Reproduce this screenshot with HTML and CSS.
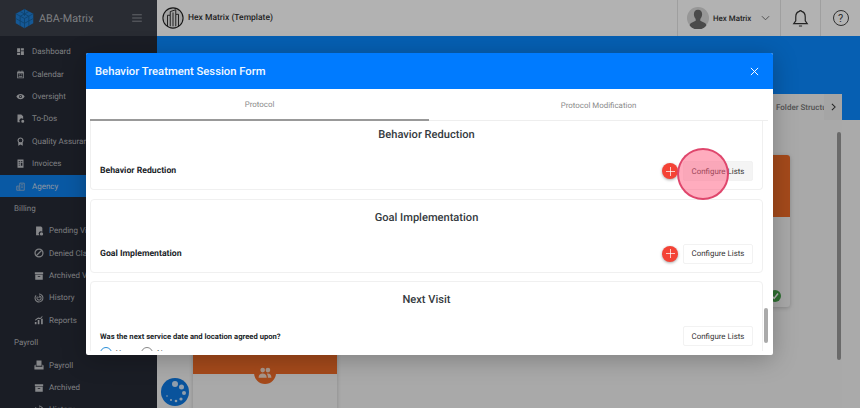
FILE: index.html
```html
<!DOCTYPE html>
<html>
<head>
  <title>ABA-Matrix - Agency</title>
  <link rel="stylesheet" href="styles.css">
</head>
<body>
  <div class="app">
    <!-- Left navigation -->
    <aside class="sidebar">
      <div class="brand">
        <svg class="logo" viewBox="0 0 24 24"><path d="M12 1l10 5.500v11L12 23 2 17.500v-11z" fill="#1f7fd6"/><path d="M12 1v8M2 6.500l10 5.500 10-5.500M12 12v11M7 4l10 5.500M17 4L7 9.500M7 9.500v11M17 9.500v11M2 12l10 5.500L22 12" stroke="#14609f" stroke-width="1" fill="none"/></svg>
        <span class="brand-name">ABA-Matrix</span>
        <svg class="burger" viewBox="0 0 12 10"><path d="M0 1h12M0 5h12M0 9h12" stroke="#a5a8ad" stroke-width="1"/></svg>
      </div>
      <nav class="nav">
        <a class="nav-item"><svg viewBox="0 0 24 24"><path d="M3 3h8v10H3zM13 3h8v6h-8zM13 11h8v10h-8zM3 15h8v6H3z"/></svg>Dashboard</a>
        <a class="nav-item"><svg viewBox="0 0 24 24"><path d="M7 1h2v3h6V1h2v3h3a1 1 0 0 1 1 1v16a1 1 0 0 1-1 1H4a1 1 0 0 1-1-1V5a1 1 0 0 1 1-1h3zM5 9v11h14V9zm2 3h4v2H7zm6 0h4v2h-4zm-6 4h10v2H7z"/></svg>Calendar</a>
        <a class="nav-item"><svg viewBox="0 0 24 24"><path fill-rule="evenodd" d="M12 5c5 0 9 3 11 7-2 4-6 7-11 7S3 16 1 12c2-4 6-7 11-7zm0 3a4 4 0 1 0 0 8 4 4 0 0 0 0-8zm0 2a2 2 0 1 1 0 4 2 2 0 0 1 0-4z"/></svg>Oversight</a>
        <a class="nav-item"><svg viewBox="0 0 24 24"><path d="M4 1h10l5 5v7a6 6 0 0 0-8 9H4zM18 15a4 4 0 1 1 0 8 4 4 0 0 1 0-8z"/></svg>To-Dos</a>
        <a class="nav-item"><svg viewBox="0 0 24 24"><path fill-rule="evenodd" d="M12 1a8 8 0 0 1 6 13.300V23l-6-3-6 3v-8.700A8 8 0 0 1 12 1zm0 3a5 5 0 1 0 0 10 5 5 0 0 0 0-10z"/></svg>Quality Assurance</a>
        <a class="nav-item"><svg viewBox="0 0 24 24"><path fill-rule="evenodd" d="M4 1h16v22H4zm3 4v2h4V5zm6 0v2h4V5zM7 10v2h4v-2zm6 0v8h4v-8zM7 15v2h4v-2z"/></svg>Invoices</a>
        <a class="nav-item active"><svg viewBox="0 0 24 24"><path fill="none" stroke="#aebfd4" stroke-width="2" d="M2 22V11h8V3h12v19zM10 11v11M14 7h4M14 11h4M14 15h4M5 15h2M5 18h2"/></svg>Agency</a>
        <div class="nav-head">Billing</div>
        <a class="nav-item sub"><svg viewBox="0 0 24 24"><path d="M5 1h12l3 3v10a5 5 0 0 0-7 8H5zM18 15a4 4 0 1 1 0 8 4 4 0 0 1 0-8z"/></svg>Pending Visits</a>
        <a class="nav-item sub"><svg viewBox="0 0 24 24"><path fill="none" stroke="#b4b6ba" stroke-width="3" d="M12 2.500a9.500 9.500 0 1 0 0 19 9.500 9.500 0 0 0 0-19zM5.500 18.500l13-13"/></svg>Denied Claims</a>
        <a class="nav-item sub"><svg viewBox="0 0 24 24"><path fill-rule="evenodd" d="M2 3h20v5H2zm1 6h18v12H3zm6 3v2h6v-2z"/></svg>Archived Visits</a>
        <a class="nav-item sub"><svg viewBox="0 0 24 24"><path fill="none" stroke="#b4b6ba" stroke-width="2.500" d="M12 2.500a9.500 9.500 0 1 1-7 3M12 7a5 5 0 1 1-3.500 1.500M12 12V9"/></svg>History</a>
        <a class="nav-item sub"><svg viewBox="0 0 24 24"><path d="M2 17h4v5H2zM9 12h4v10H9zM17 9h4v13h-4zM3 11l7-5 5 1 5-5v3l-5 5-5-1-7 5z"/></svg>Reports</a>
        <div class="nav-head">Payroll</div>
        <a class="nav-item sub"><svg viewBox="0 0 24 24"><path d="M6 1h12v13H6zM1 13l3-2v5h16v-5l3 2v10H1z"/></svg>Payroll</a>
        <a class="nav-item sub"><svg viewBox="0 0 24 24"><path fill-rule="evenodd" d="M2 3h20v5H2zm1 6h18v12H3zm6 3v2h6v-2z"/></svg>Archived</a>
        <a class="nav-item sub"><svg viewBox="0 0 24 24"><path fill="none" stroke="#b4b6ba" stroke-width="2.500" d="M12 2.500a9.500 9.500 0 1 1-7 3M12 7a5 5 0 1 1-3.500 1.500M12 12V9"/></svg>History</a>
      </nav>
    </aside>

    <!-- Main area behind the dialog -->
    <main class="main">
      <header class="topbar">
        <svg class="org-icon" viewBox="0 0 24 24"><circle cx="12" cy="12" r="11" fill="#e8e8e8" stroke="#222" stroke-width="1.200"/><path d="M6 21V9h3V5l6-2v5h3v13M9 9v12M12 6v15M15 8v13" fill="none" stroke="#222" stroke-width="1"/></svg>
        <span class="org-name">Hex Matrix (Template)</span>
        <div class="top-right">
          <div class="user">
            <svg class="user-pic" viewBox="0 0 24 24"><circle cx="12" cy="12" r="12" fill="#d8d8d8"/><path d="M12 3c3 0 4.500 2 4.500 5 0 2-1 4-2 5v2l5 2.500c1 .5 1.500 1.500 1.500 3A12 12 0 0 1 3 20.500c0-1.500.5-2.500 1.500-3L9.500 15v-2c-1-1-2-3-2-5 0-3 1.500-5 4.500-5z" fill="#6a6a6a"/></svg>
            <span class="user-name">Hex Matrix</span>
            <svg class="chevron" viewBox="0 0 10 6"><path d="M1 1l4 4 4-4" fill="none" stroke="#666" stroke-width="1"/></svg>
          </div>
          <div class="top-btn">
            <svg viewBox="0 0 24 24"><path d="M12 2a2 2 0 0 1 1.500 1C17 4 18 7 18 10v5l2.500 3.500h-17L6 15v-5c0-3 1-6 4.500-7A2 2 0 0 1 12 2zM10 21.500h4" fill="none" stroke="#333" stroke-width="1.500"/></svg>
          </div>
          <div class="top-btn help"><span>?</span></div>
        </div>
      </header>
      <div class="band"></div>
      <section class="panel">
        <div class="tab-row">
          <span class="folder-tab">Folder Structure</span>
          <span class="tab-next"><svg viewBox="0 0 6 10"><path d="M1 1l4 4-4 4" fill="none" stroke="#333" stroke-width="1.300"/></svg></span>
        </div>
        <div class="cards">
          <div class="card"><div class="card-top"></div></div>
          <div class="card"><div class="card-top"></div></div>
          <div class="card"><div class="card-top"></div></div>
          <div class="card"><div class="card-top"></div><span class="done"><svg viewBox="0 0 10 10"><path d="M2.500 5.200l1.800 1.800 3.200-4" fill="none" stroke="#fff" stroke-width="1.300"/></svg></span></div>
          <div class="card low">
            <div class="card-top">
              <span class="card-badge"><svg viewBox="0 0 24 24"><circle cx="8" cy="7" r="4"/><circle cx="17" cy="7" r="4"/><path d="M1 20c0-5 3-7 7-7s7 2 7 7zM16.500 13c4 0 6.500 2 6.500 7h-6c0-3-.5-5-2-6.800z"/></svg></span>
            </div>
          </div>
        </div>
        <span class="panel-scroll"></span>
      </section>
    </main>
  </div>

  <span class="spinner">
    <svg viewBox="0 0 28 28"><circle cx="14" cy="14" r="14" fill="#0d78e0"/><g fill="#cfe3f7"><circle cx="14" cy="6" r="3"/><circle cx="20.500" cy="9" r="2.500"/><circle cx="23" cy="15" r="2"/><circle cx="20" cy="21" r="1.600"/><circle cx="15" cy="23" r="1.300"/><circle cx="10" cy="22" r="1"/><circle cx="6" cy="18" r=".8"/></g></svg>
  </span>

  <!-- Dim layer and dialog -->
  <div class="dim"></div>
  <div class="modal">
    <div class="modal-head">
      <h2>Behavior Treatment Session Form</h2>
      <svg class="modal-close" viewBox="0 0 10 10"><path d="M1 1l8 8M9 1l-8 8" stroke="#fff" stroke-width="1.100"/></svg>
    </div>
    <div class="modal-tabs">
      <div class="modal-tab active">Protocol</div>
      <div class="modal-tab">Protocol Modification</div>
    </div>
    <div class="modal-body">
      <div class="form-card">
        <h3>Behavior Reduction</h3>
        <div class="form-row">
          <span class="row-label">Behavior Reduction</span>
          <span class="add-btn"><svg viewBox="0 0 10 10"><path d="M5 0v10M0 5h10" stroke="#fff" stroke-width=".8"/></svg></span>
          <button class="btn-lists hovered">Configure Lists</button>
        </div>
      </div>
      <div class="form-card">
        <h3>Goal Implementation</h3>
        <div class="form-row">
          <span class="row-label">Goal Implementation</span>
          <span class="add-btn"><svg viewBox="0 0 10 10"><path d="M5 0v10M0 5h10" stroke="#fff" stroke-width=".8"/></svg></span>
          <button class="btn-lists">Configure Lists</button>
        </div>
      </div>
      <div class="form-card tall">
        <h3>Next Visit</h3>
        <div class="form-row">
          <span class="row-label small">Was the next service date and location agreed upon?</span>
          <button class="btn-lists">Configure Lists</button>
        </div>
        <div class="radios">
          <span class="radio on">Yes</span>
          <span class="radio">No</span>
        </div>
      </div>
    </div>
    <span class="modal-scroll"></span>
  </div>

  <!-- Click highlight -->
  <span class="click-mark"></span>
</body>
</html>
```

FILE: styles.css
```css
html, body {
  margin: 0;
  height: 100%;
  overflow: hidden;
}
body {
  font-family: Roboto, "Liberation Sans", sans-serif;
  color: #212529;
  background: #f4f4f4;
  text-rendering: geometricPrecision;
}
.app {
  display: flex;
  height: 408px;
  overflow: hidden;
}

/* Sidebar */
.sidebar {
  width: 157px;
  flex: none;
  background: #262a36;
  color: #b4b6ba;
  overflow: hidden;
}
.brand {
  height: 36px;
  display: flex;
  align-items: center;
  padding: 0 14px;
  background: #3b3f49;
  box-sizing: border-box;
}
.logo {
  width: 21px;
  height: 21px;
  flex: none;
}
.brand-name {
  margin-left: 4px;
  font-size: 10.800px;
  color: #b4b6ba;
}
.burger {
  width: 10px;
  height: 8px;
  margin-left: auto;
  margin-right: 1px;
}
.nav {
  padding-top: 4.500px;
}
.nav-item {
  display: flex;
  align-items: center;
  height: 22.4px;
  padding-left: 16px;
  font-size: 8px;
  color: #b4b6ba;
}
.nav-item svg {
  width: 9px;
  height: 9px;
  flex: none;
  margin-right: 7px;
  fill: #c0c2c6;
}
.nav-item.sub {
  padding-left: 34px;
}
.nav-item.sub svg {
  width: 10px;
  height: 10px;
  margin-right: 5px;
}
.nav-item.active {
  background: #0d80eb;
  color: #c6d6ea;
}
.nav-head {
  display: flex;
  align-items: center;
  height: 22.4px;
  padding-left: 14px;
  font-size: 8px;
}

/* Main */
.main {
  flex: 1;
  min-width: 0;
  display: flex;
  flex-direction: column;
}
.topbar {
  height: 36px;
  flex: none;
  display: flex;
  align-items: center;
  padding-left: 5px;
  background: #fff;
  box-sizing: border-box;
}
.org-icon {
  width: 22px;
  height: 22px;
  flex: none;
}
.org-name {
  margin-left: 4px;
  font-size: 8.500px;
  font-weight: 500;
  color: #333;
}
.top-right {
  margin-left: auto;
  display: flex;
  height: 100%;
}
.user {
  width: 103px;
  display: flex;
  align-items: center;
  padding-left: 9px;
  box-sizing: border-box;
  border-left: 1px solid #e4e4e4;
}
.user-pic {
  width: 22px;
  height: 22px;
  flex: none;
}
.user-name {
  margin-left: 4px;
  font-size: 7.900px;
  font-weight: 500;
  color: #333;
}
.chevron {
  width: 9px;
  height: 6px;
  margin-left: 10px;
}
.top-btn {
  width: 40px;
  display: flex;
  align-items: center;
  justify-content: center;
  box-sizing: border-box;
  border-left: 1px solid #e4e4e4;
}
.top-btn svg {
  width: 19px;
  height: 19px;
}
.help span {
  width: 14px;
  height: 14px;
  border: 1.300px solid #444;
  border-radius: 50%;
  display: flex;
  align-items: center;
  justify-content: center;
  font-size: 11px;
  color: #444;
}
.band {
  height: 84px;
  flex: none;
  background: #0a88ff;
}
.panel {
  position: relative;
  flex: 1;
  margin: -26px 18px 0 0;
  background: #f2f2f2;
}
.tab-row {
  height: 26px;
  display: flex;
  justify-content: flex-end;
  align-items: center;
  overflow: hidden;
}
.folder-tab {
  width: 48px;
  overflow: hidden;
  white-space: nowrap;
  font-size: 8px;
  font-weight: 500;
  color: #777;
}
.tab-next {
  width: 18px;
  height: 26px;
  display: flex;
  align-items: center;
  justify-content: center;
  background: #ececec;
}
.tab-next svg {
  width: 5px;
  height: 8px;
}
.cards {
  display: grid;
  grid-template-columns: repeat(4, 144px);
  grid-auto-rows: 152px;
  gap: 9px 7px;
  padding: 35px 0 0 36px;
}
.card {
  position: relative;
  background: #f2f2f2;
  box-shadow: 0 1px 4px rgba(0,0,0,.2);
  border-radius: 3px;
}
.card-top {
  position: relative;
  height: 62px;
  background: #ec6a28;
  border-radius: 3px 3px 0 0;
}
.card.low .card-top {
  height: 58px;
}
.card-badge {
  position: absolute;
  left: 50%;
  bottom: -10px;
  width: 22px;
  height: 22px;
  margin-left: -11px;
  border-radius: 50%;
  background: #ec6a28;
  display: flex;
  align-items: center;
  justify-content: center;
}
.card-badge svg {
  width: 14px;
  height: 14px;
  fill: #f2d9c8;
}
.done {
  position: absolute;
  right: 9px;
  bottom: 5px;
  width: 12px;
  height: 12px;
  border-radius: 50%;
  background: #43a047;
}
.done svg {
  display: block;
}
.panel-scroll {
  position: absolute;
  left: 680px;
  top: 38px;
  width: 4px;
  height: 228px;
  border-radius: 2px;
  background: #999;
}
.spinner {
  position: absolute;
  left: 161px;
  top: 378px;
  width: 28px;
  height: 28px;
}
.spinner svg {
  display: block;
}

/* Dialog */
.dim {
  position: absolute;
  inset: 0;
  background: rgba(0,0,0,.3);
}
.modal {
  position: absolute;
  left: 86px;
  top: 53px;
  width: 687px;
  height: 302px;
  padding-bottom: 4px;
  box-sizing: border-box;
  display: flex;
  flex-direction: column;
  background: #fff;
  border-radius: 2px;
  box-shadow: 0 4px 24px rgba(0,0,0,.25);
  overflow: hidden;
}
.modal-head {
  height: 36px;
  flex: none;
  display: flex;
  align-items: center;
  justify-content: space-between;
  padding: 0 14px 0 9px;
  background: #007bff;
}
.modal-head h2 {
  margin: 0;
  font-size: 11.250px;
  font-weight: 500;
  color: #f2f8ff;
}
.modal-close {
  width: 9px;
  height: 9px;
}
.modal-tabs {
  height: 32px;
  flex: none;
  display: flex;
  margin: 0 5px 0 4px;
  box-sizing: border-box;
  border-bottom: 1px solid #eee;
}
.modal-tab {
  flex: 1;
  display: flex;
  align-items: center;
  justify-content: center;
  margin-bottom: -1px;
  font-size: 7.900px;
  color: #8a8a8a;
}
.modal-tab.active {
  border-bottom: 2px solid #999;
  box-sizing: border-box;
}
.modal-body {
  flex: 1;
  min-height: 0;
  overflow: hidden;
  padding: 0 10px 0 4px;
}
.form-card {
  height: 74px;
  margin-bottom: 8.500px;
  box-sizing: border-box;
  padding-top: 11px;
  border: 1px solid #f0f0f0;
  border-radius: 4px;
}
.form-card:first-child {
  margin-top: -5px;
  padding-top: 12px;
  border-top: 0;
}
.form-card.tall {
  height: 100px;
}
.form-card h3 {
  margin: 0;
  font-size: 11.100px;
  line-height: 14px;
  font-weight: 500;
  text-align: center;
  color: #343a40;
}
.form-row {
  display: flex;
  align-items: center;
  height: 20px;
  margin-top: 19px;
  padding: 0 9px;
}
.row-label {
  font-size: 8.700px;
  font-weight: 700;
  color: #212529;
}
.row-label.small {
  font-size: 7.650px;
}
.add-btn {
  width: 16px;
  height: 16px;
  margin-left: auto;
  border-radius: 50%;
  background: #f44336;
  box-shadow: 0 1px 3px rgba(0,0,0,.35);
  display: flex;
  align-items: center;
  justify-content: center;
}
.add-btn svg {
  width: 9px;
  height: 9px;
}
.btn-lists {
  width: 70px;
  height: 20px;
  margin-left: 5px;
  padding: 0;
  border: 1px solid #f2f2f2;
  border-radius: 2px;
  background: #fff;
  font-family: inherit;
  font-size: 7.900px;
  color: #333;
  text-rendering: geometricPrecision;
}
.row-label.small + .btn-lists {
  margin-left: auto;
}
.btn-lists.hovered {
  background: #f4f4f4;
}
.radios {
  display: flex;
  gap: 12px;
  margin-top: 1px;
  padding-left: 9px;
}
.radio {
  display: flex;
  align-items: center;
  gap: 4px;
  font-size: 8px;
  color: #333;
}
.radio::before {
  content: "";
  width: 10px;
  height: 10px;
  border: 1px solid #888;
  border-radius: 50%;
}
.radio.on::before {
  border-color: #2a8fd8;
}
.modal-scroll {
  position: absolute;
  left: 678px;
  top: 255px;
  width: 4px;
  height: 35px;
  border-radius: 2px;
  background: #aaa;
}

.click-mark {
  position: absolute;
  left: 677px;
  top: 148px;
  width: 52px;
  height: 52px;
  box-sizing: border-box;
  border: 2px solid rgba(220,60,100,.9);
  border-radius: 50%;
  background: rgba(255,90,125,.5);
}
```
